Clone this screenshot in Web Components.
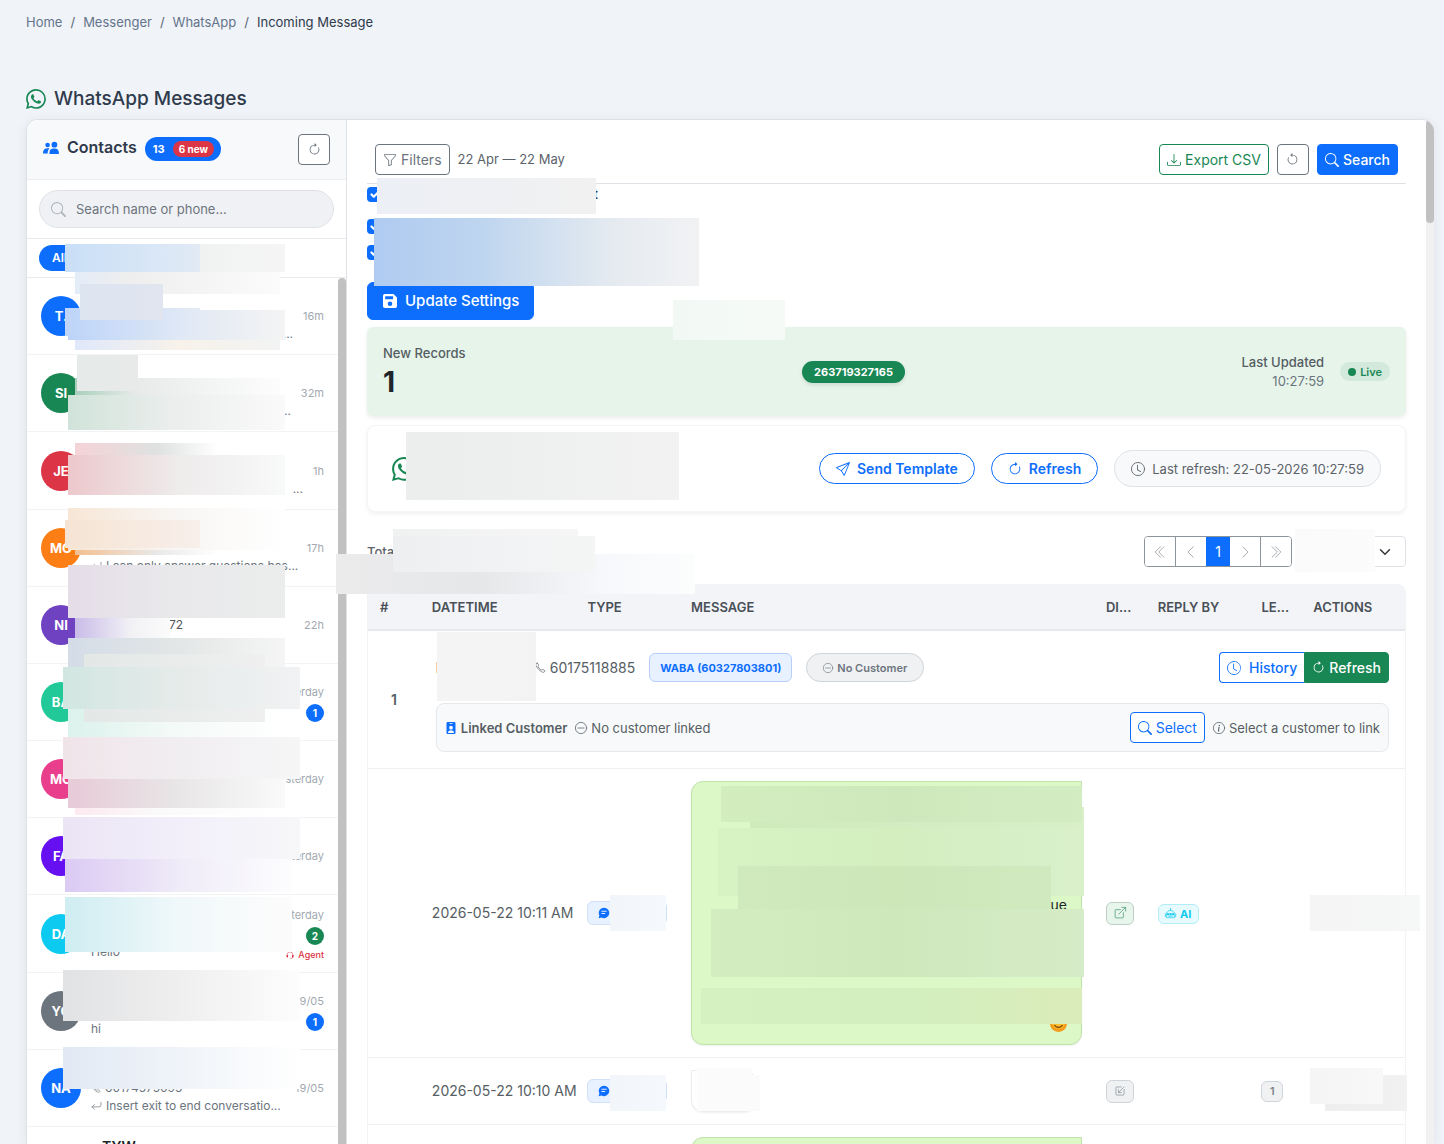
<!DOCTYPE html>
<html lang="en">
<head>
<meta charset="utf-8">
<title>WhatsApp Messages</title>
<style>
    html, body { height: 100%; }
    body {
        margin: 0;
        overflow: hidden;
        background: #f0f3f8;
        color: #2f3b4c;
        font: 13px/20px Inter, "Liberation Sans", sans-serif;
    }
</style>
</head>
<body>
<whatsapp-page></whatsapp-page>

<script>
// icon markup on a 16x16 grid, .s = stroked
const ICONS = {
    whatsapp: '<path d="M13.601 2.326A7.85 7.85 0 0 0 7.994 0C3.627 0 .068 3.558.064 7.926c0 1.399.366 2.76 1.057 3.965L0 16l4.204-1.102a7.9 7.9 0 0 0 3.79.965h.004c4.368 0 7.926-3.558 7.93-7.93A7.9 7.9 0 0 0 13.6 2.326zM7.994 14.521a6.6 6.6 0 0 1-3.356-.92l-.24-.144-2.494.654.666-2.433-.156-.251a6.56 6.56 0 0 1-1.007-3.505c0-3.626 2.957-6.584 6.591-6.584a6.56 6.56 0 0 1 4.66 1.931 6.56 6.56 0 0 1 1.928 4.66c-.004 3.639-2.961 6.592-6.592 6.592m3.615-4.934c-.197-.099-1.17-.578-1.353-.646-.182-.065-.315-.099-.445.099-.133.197-.513.646-.627.775-.114.133-.232.148-.43.05-.197-.1-.836-.308-1.592-.985-.59-.525-.985-1.175-1.103-1.372-.114-.198-.011-.304.088-.403.087-.088.197-.232.296-.346.1-.114.133-.198.198-.33.065-.134.034-.248-.015-.347-.05-.099-.445-1.076-.612-1.47-.16-.389-.323-.335-.445-.34-.114-.007-.247-.007-.38-.007a.73.73 0 0 0-.529.247c-.182.198-.691.677-.691 1.654s.71 1.916.81 2.049c.098.133 1.394 2.132 3.383 2.992.47.205.84.326 1.129.418.475.152.904.129 1.246.08.38-.058 1.171-.48 1.338-.943.164-.464.164-.86.114-.943-.049-.084-.182-.133-.38-.232"/>',
    people: '<circle cx="4.6" cy="5" r="2.3"/><circle cx="11.4" cy="4.7" r="2.9"/><path d="M6.500 14c-.4-3.600 1.300-5.400 4.700-5.400s5 1.800 4.700 5.400zM0 13.500c-.2-3.500 1.500-5.300 5-5.300.6 0 1 .1 1.500.2-1.400 1.200-1.900 3-1.800 5.100z"/>',
    clockwise: '<path d="M8 3a5 5 0 1 0 4.546 2.914.5.5 0 0 1 .908-.417A6 6 0 1 1 8 2z"/><path d="M8 4.466V.534a.25.25 0 0 1 .41-.192l2.360 1.966c.12.1.12.284 0 .384L8.410 4.658A.25.25 0 0 1 8 4.466"/>',
    counter: '<path d="M8 3a5 5 0 1 1-4.546 2.914.5.5 0 0 0-.908-.417A6 6 0 1 0 8 2z"/><path d="M8 4.466V.534a.25.25 0 0 0-.41-.192L5.230 2.308a.25.25 0 0 0 0 .384l2.360 1.966A.25.25 0 0 0 8 4.466"/>',
    search: '<path d="M11.742 10.344a6.5 6.5 0 1 0-1.397 1.398h-.001q.044.06.098.115l3.850 3.850a1 1 0 0 0 1.415-1.414l-3.850-3.850a1 1 0 0 0-.115-.1zM12 6.5a5.5 5.5 0 1 1-11 0 5.5 5.5 0 0 1 11 0"/>',
    funnel: '<path d="M1.5 1.5A.5.5 0 0 1 2 1h12a.5.5 0 0 1 .5.5v2a.5.5 0 0 1-.128.334L10 8.692V13.500a.5.5 0 0 1-.342.474l-3 1A.5.5 0 0 1 6 14.500V8.692L1.628 3.834A.5.5 0 0 1 1.5 3.5zm1 .5v1.308l4.372 4.858A.5.5 0 0 1 7 8.500v5.306l2-.666V8.500a.5.5 0 0 1 .128-.334L13.500 3.308V2z"/>',
    download: '<path d="M.5 9.900a.5.5 0 0 1 .5.5v2.500a1 1 0 0 0 1 1h12a1 1 0 0 0 1-1v-2.500a.5.5 0 0 1 1 0v2.500a2 2 0 0 1-2 2H2a2 2 0 0 1-2-2v-2.500a.5.5 0 0 1 .5-.5"/><path d="M7.646 11.854a.5.5 0 0 0 .708 0l3-3a.5.5 0 0 0-.708-.708L8.500 10.293V1.500a.5.5 0 0 0-1 0v8.793L5.354 8.146a.5.5 0 1 0-.708.708z"/>',
    send: '<path d="M15.854.146a.5.5 0 0 1 .11.54l-5.819 14.547a.75.75 0 0 1-1.329.124l-3.178-4.995L.643 7.184a.75.75 0 0 1 .124-1.330L15.314.037a.5.5 0 0 1 .54.11ZM6.636 10.070l2.761 4.338L14.130 2.576zm6.787-8.201L1.591 6.602l4.339 2.760z"/>',
    clock: '<path d="M8 3.500a.5.5 0 0 0-1 0V9a.5.5 0 0 0 .252.434l3.500 2a.5.5 0 0 0 .496-.868L8 8.710z"/><circle class="s" cx="8" cy="8" r="7.5"/>',
    history: '<path class="s" d="M8 .5a7.500 7.500 0 1 0 0 15c2 0 3.800-.8 5.200-2.100M7.500 3.500V9l3.500 2"/><path class="s" stroke-dasharray="1.500 1.300" d="M8 .5a7.500 7.500 0 0 1 5.500 12.600"/>',
    save: '<path fill-rule="evenodd" d="M2 0h10l4 4v10a2 2 0 0 1-2 2H2a2 2 0 0 1-2-2V2a2 2 0 0 1 2-2zM2.500 2.500v3.500h9V2.500zM8 8.500a2.600 2.600 0 1 0 0 5.200 2.600 2.600 0 0 0 0-5.200z"/>',
    first: '<path class="s" d="M8.500 2l-6 6 6 6M12.500 2l-6 6 6 6"/>',
    prev: '<path class="s" d="M10.500 2l-6 6 6 6"/>',
    next: '<path class="s" d="M5.500 2l6 6-6 6"/>',
    last: '<path class="s" d="M3.500 2l6 6-6 6M7.500 2l6 6-6 6"/>',
    phone: '<path class="s" d="M3.300 1.600L5.100 4c.2.300-.7 2.600-.4 3.400.5 1.400 2.800 3.700 4 4 .8.200 3-.6 3.300-.4l2.400 1.800c.5.400-.9 1.900-1.500 2.100C9.700 16 .5 7.500 1.300 3.200c.2-.7 1.600-2.100 2-1.600z"/>',
    dash: '<circle class="s" cx="8" cy="8" r="7.500"/><path class="s" d="M4 8h8"/>',
    info: '<circle class="s" cx="8" cy="8" r="7.500"/><path d="M8.900 6.600l-2.300.3-.1.400.5.100c.3.100.3.200.3.400l-.7 3.500c-.2.900.1 1.300.8 1.300.6 0 1.200-.3 1.500-.6l.1-.4c-.2.200-.5.200-.7.200-.3 0-.4-.2-.3-.5z"/><circle cx="8.500" cy="4.500" r="1"/>',
    badge: '<path fill-rule="evenodd" d="M3.500 0h9A1.500 1.500 0 0 1 14 1.500v13a1.500 1.500 0 0 1-1.500 1.500h-9A1.500 1.500 0 0 1 2 14.500v-13A1.500 1.500 0 0 1 3.500 0zM6 1.500v1h4v-1zM8 5a2.500 2.500 0 1 0 0 5 2.500 2.500 0 0 0 0-5zM4 14.500h8c0-2.300-1.500-3.500-4-3.500s-4 1.200-4 3.500z"/>',
    chat: '<path fill-rule="evenodd" d="M8 1a7 7 0 1 1-3.400 13.100L.8 15l1.100-3.600A7 7 0 0 1 8 1zM4.500 5v1.300h7V5zm0 3v1.300h5V8z"/>',
    out: '<path class="s" d="M8.500 3.500h-6a1 1 0 0 0-1 1v9a1 1 0 0 0 1 1h9a1 1 0 0 0 1-1v-6M10.500.5h5v5M15.500.5L6.500 9.500"/>',
    in: '<path class="s" d="M10 1.500H3a1.500 1.500 0 0 0-1.500 1.500v10A1.500 1.500 0 0 0 3 14.500h10a1.500 1.500 0 0 0 1.500-1.500V5.500M5.500 6v4.500H10M14.500 1.500l-9 9"/>',
    robot: '<path class="s" d="M2 13.500V9.500a6 6 0 0 1 12 0v4zM8 .5v3M.5 8.500v4M15.500 8.500v4M5.500 12h5"/><path fill-rule="evenodd" d="M3 7.500h10v3H3zM5.500 8.200v1.300h1.300V8.200zm3.800 0v1.300h1.300V8.200z"/>',
    reply: '<path class="s" d="M14.500 2v3.500a3 3 0 0 1-3 3H1.500M5 5L1.500 8.500 5 12"/>',
    headset: '<path class="s" d="M2 9V8a6 6 0 0 1 12 0v4c0 1.500-1 2.500-3 2.500H8.500"/><path d="M1 8h3v5H3a2 2 0 0 1-2-2zM12 8h3v3a2 2 0 0 1-2 2h-1z"/>',
    smile: '<circle cx="8" cy="8" r="8" fill="#f59b1c"/><ellipse cx="8" cy="7.500" rx="6" ry="5.800" fill="#fbc02d"/><path d="M4 9.500q4 4.500 8 0" fill="none" stroke="#8a4b08" stroke-width="1.300"/>'
};

// registers an element whose shadow root is filled from html(el)
function define(name, html) {
    customElements.define(name, class extends HTMLElement {
        constructor() {
            super();
            this._isInitialized = false;
        }
        connectedCallback() {
            if (this._isInitialized) return;
            this._isInitialized = true;
            const root = this.attachShadow({ mode: "open" });
            const template = document.createElement("template");
            template.innerHTML = html(this);
            root.append(template.content.cloneNode(true));
        }
    });
}

define("ui-icon", el => `
    <style>
        :host { display: inline-flex; flex: none; }
        svg { display: block; fill: currentColor; overflow: visible; }
        .s { fill: none; stroke: currentColor; stroke-linecap: round; stroke-linejoin: round; }
    </style>
    <svg viewBox="0 0 16 16" width="${el.getAttribute("size") || 14}" height="${el.getAttribute("size") || 14}" aria-hidden="true">${ICONS[el.getAttribute("name")]}</svg>
`);

define("ui-button", el => `
    <style>
        :host { display: inline-flex; --c: #6c757d; }
        :host([tone=blue]) { --c: #0d6efd; }
        :host([tone=green]) { --c: #198754; }
        button {
            display: inline-flex; align-items: center; justify-content: center; gap: 4px;
            font: 400 14px/21px Inter, sans-serif; color: var(--c); background: #fff;
            border: 1px solid var(--c); border-radius: 4px; padding: 4px 7px; margin: 0; white-space: nowrap;
        }
        :host([solid]) button { background: var(--c); color: #fff; font-weight: 500; }
        :host([medium]) button { font-weight: 500; }
        :host([square]) button { width: 32px; height: 31px; padding: 0; }
        :host([pill]) button { border-radius: 16px; padding: 4px 16px; gap: 7px; font-weight: 600; }
        :host([large]) button { font-size: 15px; line-height: 24px; padding: 6px 14px 6px 15px; gap: 8px; border-radius: 6px; }
        :host([first]) button { border-radius: 4px 0 0 4px; border-right: 0; gap: 8px; }
        :host([last]) button { border-radius: 0 4px 4px 0; }
    </style>
    <button type="button" aria-label="${el.getAttribute("label") || el.textContent.trim()}">
        <ui-icon name="${el.getAttribute("icon")}" size="${el.getAttribute("icon-size") || 14}"></ui-icon><slot></slot>
    </button>
`);

define("mask-block", el => {
    const a = n => el.getAttribute(n);
    return `
    <style>
        :host {
            position: absolute; pointer-events: none;
            ${a("r") !== null ? "right" : "left"}: ${a("r") !== null ? a("r") : a("x")}px;
            top: ${a("y")}px; width: ${a("w")}px; height: ${a("h")}px;
            background: linear-gradient(90deg, ${a("fill")});
        }
    </style>`;
});

define("page-breadcrumb", () => `
    <style>
        :host { display: block; }
        ol { display: flex; gap: 8px; list-style: none; margin: 0; padding: 0; }
        li + li { display: flex; gap: 8px; }
        li + li::before { content: "/"; color: #5b6675; }
        a { color: #64748b; text-decoration: none; }
    </style>
    <nav aria-label="Breadcrumb"><ol>
        <li><a href="#">Home</a></li>
        <li><a href="#">Messenger</a></li>
        <li><a href="#">WhatsApp</a></li>
        <li aria-current="page">Incoming Message</li>
    </ol></nav>
`);

define("contact-row", el => {
    const a = n => el.getAttribute(n);
    return `
    <style>
        :host {
            display: flex; align-items: center; gap: 10px; box-sizing: border-box; flex: none;
            height: 77px; padding: 0 14px; border-bottom: 1px solid #f2f3f5;
        }
        :host([tall]) { height: 78px; }
        .avatar {
            width: 40px; height: 40px; border-radius: 50%; flex: none; box-sizing: border-box;
            background: ${a("color")}; color: #fff; font-weight: 700; line-height: 40px; text-align: center;
        }
        .body { flex: 1; min-width: 0; font-size: 12px; line-height: 18px; color: #6c757d; }
        .body div { height: 18px; display: flex; align-items: center; gap: 4px; }
        .name { color: #212529; font-size: 14px; font-weight: 600; padding-left: 11px; }
        .tail { width: 92px; text-align: right; color: #555; }
        .text { white-space: nowrap; }
        .push { margin-left: auto; }
        .meta { display: flex; flex-direction: column; align-items: flex-end; gap: 3px; }
        .time { font-size: 11px; line-height: 18px; color: #a3a9b0; }
        .count {
            min-width: 18px; height: 18px; border-radius: 9px; background: #0d6efd; color: #fff;
            font-size: 10px; font-weight: 700; line-height: 18px; text-align: center;
        }
        .count.green { background: #198754; }
        .agent { display: flex; align-items: center; gap: 4px; font-size: 9px; font-weight: 500; line-height: 14px; color: #dc3545; }
    </style>
    <div class="avatar">${a("initials")}</div>
    <div class="body">
        <div class="name">${a("name") || ""}</div>
        <div>${a("phone") ? `<ui-icon name="phone" size="10"></ui-icon>${a("phone")}` : ""}${a("tail") ? `<span class="tail">${a("tail")}</span>` : ""}</div>
        <div>${a("icon") ? `<ui-icon name="${a("icon")}" size="11"></ui-icon>` : ""}<span class="text ${a("preview") === "..." ? "push" : ""}">${a("preview") || ""}</span></div>
    </div>
    <div class="meta">
        <span class="time">${a("time") || ""}</span>
        ${a("count") ? `<span class="count ${a("agent") !== null ? "green" : ""}">${a("count")}</span>` : ""}
        ${a("agent") !== null ? `<span class="agent"><ui-icon name="headset" size="8"></ui-icon>Agent</span>` : ""}
    </div>`;
});

define("contacts-panel", () => `
    <style>
        :host { display: flex; flex-direction: column; min-height: 0; border-right: 1px solid #dee2e6; background: #fff; }
        header { display: flex; justify-content: space-between; align-items: center; padding: 14px 16px; background: #f8f9fa; border-bottom: 1px solid #eceef0; }
        h2 { display: flex; align-items: baseline; gap: 8px; margin: 0 0 4px; font-size: 16px; font-weight: 600; line-height: 24px; }
        h2 ui-icon { align-self: center; color: #0d6efd; }
        .total { display: flex; align-items: center; gap: 8px; background: #0d6efd; color: #fff; font-size: 11px; font-weight: 700; border-radius: 12px; padding: 0 7px 0 8px; height: 24px; }
        .new { background: #dc3545; font-size: 10px; line-height: 16px; border-radius: 8px; padding: 0 6px; }
        .search { padding: 10px 12px; border-bottom: 1px solid #e9ecef; }
        label { display: flex; align-items: center; gap: 10px; height: 36px; padding: 0 11px; border: 1px solid #dee2e6; border-radius: 19px; background: #f0f1f5; color: #adb5bd; }
        input { flex: 1; min-width: 0; border: 0; background: none; outline: 0; padding: 0; font: 13px/20px Inter, sans-serif; }
        input::placeholder { color: #6c757d; }
        .tabs { padding: 6px 12px; border-bottom: 1px solid #e9ecef; }
        .tabs button { display: block; height: 26px; border: 0; border-radius: 13px; background: #0d6efd; color: #fff; font: 600 12px/26px Inter, sans-serif; padding: 0 13px; }
        .scroll { display: flex; flex: 1; min-height: 0; }
        .list { flex: 1; min-width: 0; overflow: hidden; display: flex; flex-direction: column; }
        .bar { width: 8px; background: #c1c1c1; border-radius: 4px 4px 0 0; }
    </style>
    <header>
        <h2><ui-icon name="people" size="16"></ui-icon>Contacts <span class="total">13 <span class="new">6 new</span></span></h2>
        <ui-button icon="clockwise" icon-size="13" square label="Reload contacts"></ui-button>
    </header>
    <div class="search"><label><ui-icon name="search" size="15"></ui-icon><input type="text" placeholder="Search name or phone..." aria-label="Search name or phone"></label></div>
    <div class="tabs"><button type="button">All</button></div>
    <div class="scroll">
        <div class="list">
            <contact-row initials="T." color="#0d6efd" time="16m" preview="..."></contact-row>
            <contact-row initials="SI" color="#198754" time="32m" preview="..."></contact-row>
            <contact-row initials="JE" color="#dc3545" time="1h" preview="..." tall></contact-row>
            <contact-row initials="MO" color="#fd7e14" time="17h" icon="reply" preview="I can only answer questions bas..."></contact-row>
            <contact-row initials="NI" color="#6f42c1" time="22h" tail="72"></contact-row>
            <contact-row initials="BA" color="#20c997" time="Yesterday" count="1"></contact-row>
            <contact-row initials="MO" color="#e83e8c" time="Yesterday"></contact-row>
            <contact-row initials="FA" color="#6610f2" time="Yesterday"></contact-row>
            <contact-row initials="DA" color="#0dcaf0" time="Yesterday" count="2" agent preview="Hello" tall></contact-row>
            <contact-row initials="YO" color="#6c757d" time="19/05" count="1" preview="hi"></contact-row>
            <contact-row initials="NA" color="#0d6efd" time="19/05" phone="60174575095" icon="reply" preview="Insert exit to end conversatio..."></contact-row>
            <contact-row initials="TY" color="#198754" name="TYW"></contact-row>
        </div>
        <div class="bar"></div>
    </div>
`);

define("filter-bar", () => `
    <style>
        :host { display: flex; align-items: center; gap: 8px; padding: 8px; border-bottom: 1px solid #dee2e6; }
        .range { flex: 1; padding-bottom: 2px; color: #5c636a; }
    </style>
    <ui-button icon="funnel">Filters</ui-button>
    <span class="range">22 Apr — 22 May</span>
    <ui-button icon="download" tone="green">Export CSV</ui-button>
    <ui-button icon="counter" icon-size="13" square label="Reset"></ui-button>
    <ui-button icon="search" tone="blue" solid>Search</ui-button>
`);

define("notify-settings", () => `
    <style>
        :host { display: block; padding-top: 2px; }
        label { display: flex; align-items: center; height: 16px; margin-bottom: 16px; font-size: 14px; font-weight: 600; }
        label + label { margin-bottom: 10px; }
        label + label + label { margin-bottom: 22px; }
        span { padding-left: 211px; }
        input {
            appearance: none; box-sizing: border-box; width: 15px; height: 15px; margin: 0; border-radius: 4px;
            background: #0d6efd url("data:image/svg+xml,%3Csvg xmlns='http://www.w3.org/2000/svg' viewBox='0 0 20 20'%3E%3Cpath fill='none' stroke='%23fff' stroke-linecap='round' stroke-linejoin='round' stroke-width='3' d='m6 10 3 3 6-6'/%3E%3C/svg%3E");
        }
    </style>
    <label><input type="checkbox" checked><span>t</span></label>
    <label><input type="checkbox" checked aria-label="Sound"></label>
    <label><input type="checkbox" checked aria-label="Popup"></label>
    <ui-button icon="save" tone="blue" solid large>Update Settings</ui-button>
`);

define("records-card", () => `
    <style>
        :host {
            display: flex; justify-content: space-between; align-items: center; box-sizing: border-box;
            height: 89px; padding: 0 16px; background: #e6f4ea; border-radius: 6px; box-shadow: 0 2px 4px rgba(0,0,0,.08);
            color: #555d63; font-weight: 500;
        }
        b { display: block; color: #212529; font-size: 28px; line-height: 38px; }
        .number { background: #198754; color: #fff; font-size: 11px; font-weight: 700; line-height: 22px; padding: 0 12px; border-radius: 11px; box-shadow: 0 2px 4px rgba(0,0,0,.1); }
        .right { display: flex; align-items: center; gap: 16px; text-align: right; }
        .time { font-weight: 400; color: #6c757d; }
        .right div > div { line-height: 19px; }
        .live { display: flex; align-items: center; gap: 4px; height: 19px; padding: 0 8px; border-radius: 10px; background: #d3e9dc; color: #198754; font-size: 11px; font-weight: 600; }
        .live::before { content: ""; width: 8px; height: 8px; border-radius: 50%; background: #198754; }
    </style>
    <div>New Records<b>1</b></div>
    <span class="number">263719327165</span>
    <div class="right"><div><div>Last Updated</div><div class="time">10:27:59</div></div><span class="live">Live</span></div>
`);

define("channel-card", () => `
    <style>
        :host {
            display: flex; align-items: center; gap: 16px; box-sizing: border-box; height: 87px; padding: 0 24px;
            border: 1px solid #f4f5f6; border-radius: 8px; background: #fff; box-shadow: 0 2px 4px rgba(0,0,0,.06);
        }
        .logo { flex: 1; color: #198754; }
        .stamp { display: flex; align-items: center; gap: 7px; height: 35px; padding: 0 16px; border: 1px solid #dee2e6; border-radius: 19px; background: #f8f9fa; color: #5c636a; }
    </style>
    <ui-icon class="logo" name="whatsapp" size="24"></ui-icon>
    <ui-button icon="send" tone="blue" pill>Send Template</ui-button>
    <ui-button icon="clockwise" tone="blue" pill>Refresh</ui-button>
    <span class="stamp"><ui-icon name="clock"></ui-icon>Last refresh: 22-05-2026 10:27:59</span>
`);

define("list-pager", () => `
    <style>
        :host { display: flex; align-items: center; gap: 8px; }
        .total { flex: 1; font-weight: 500; color: #5c636a; }
        nav { display: flex; height: 31px; box-sizing: border-box; border: 1px solid #8d949a; border-radius: 4px; overflow: hidden; }
        nav button { width: 31px; border: 0; border-right: 1px solid #8d949a; padding: 0; background: #fff; color: #9aa0a6; display: flex; align-items: center; justify-content: center; font: 14px/20px Inter, sans-serif; }
        nav button:nth-child(2) { border: 0; width: 30px; }
        nav button:last-child { border: 0; width: 30px; }
        nav .on { width: 24px; height: 31px; margin: -1px 0; border: 0; background: #0d6efd; color: #fff; }
        select {
            width: 106px; height: 31px; border: 1px solid #dee2e6; border-radius: 4px; appearance: none;
            background: #fff url("data:image/svg+xml,%3Csvg xmlns='http://www.w3.org/2000/svg' viewBox='0 0 16 16'%3E%3Cpath fill='none' stroke='%23343a40' stroke-linecap='round' stroke-linejoin='round' stroke-width='2' d='m2 5 6 6 6-6'/%3E%3C/svg%3E") no-repeat right 14px center / 12px 12px;
        }
    </style>
    <span class="total">Total</span>
    <nav aria-label="Pages">
        <button type="button" aria-label="First"><ui-icon name="first"></ui-icon></button>
        <button type="button" aria-label="Previous"><ui-icon name="prev"></ui-icon></button>
        <button type="button" class="on">1</button>
        <button type="button" aria-label="Next"><ui-icon name="next"></ui-icon></button>
        <button type="button" aria-label="Last"><ui-icon name="last"></ui-icon></button>
    </nav>
    <select aria-label="Rows per page"><option></option></select>
`);

define("message-bubble", () => `
    <style>
        :host {
            display: flex; flex-direction: column; align-items: flex-end; justify-content: space-between; position: relative;
            box-sizing: border-box; height: 264px; padding: 12px 14px; color: #212529; text-align: right;
            background: #dcf8c6; border: 1px solid #c0e2ab; border-radius: 12px 0 12px 12px; box-shadow: 0 1px 2px rgba(0,0,0,.06);
        }
        :host([plain]) { width: 65px; height: 42px; background: #fff; border-color: #ebedef; border-radius: 0 12px 12px 12px; }
    </style>
    <slot></slot>
`);

define("message-table", () => `
    <style>
        :host { display: block; border: 1px solid #f2f3f5; border-top: 0; border-radius: 8px 8px 0 0; background: #fff; }
        table { width: 100%; table-layout: fixed; border-collapse: separate; border-spacing: 0; font-size: 14px; color: #565e64; }
        th {
            box-sizing: border-box; height: 47px; padding: 0 12px; background: #f3f4f7; border-bottom: 2px solid #e6e8eb;
            font-size: 13px; font-weight: 600; color: #495057; text-align: left; white-space: nowrap;
        }
        th:first-child { border-top-left-radius: 8px; }
        th:last-child { border-top-right-radius: 8px; }
        td { padding: 12px; border-bottom: 1px solid #eef0f2; white-space: nowrap; }
        .n { text-align: center; font-weight: 600; }
        .wide { padding: 21px 16px 16px; }
        .row { display: flex; align-items: center; gap: 14px; }
        .name { width: 85px; font-weight: 600; }
        .phone { display: flex; align-items: center; gap: 4px; }
        .waba, .none { display: flex; align-items: center; gap: 4px; height: 27px; padding: 0 10px; border: 1px solid #b6d0fb; border-radius: 6px; background: #e7f1ff; color: #0d6efd; font-size: 11px; font-weight: 700; }
        .none { padding: 0 16px; border-color: #ced4da; border-radius: 15px; background: #f0f1f3; color: #6c757d; font-weight: 600; }
        .group { display: flex; margin-left: auto; }
        .linked { display: flex; align-items: center; gap: 8px; margin-top: 20px; padding: 8px; border: 1px solid #e6e9ec; border-radius: 8px; background: #f8f9fa; font-size: 13px; }
        .linked span { display: flex; align-items: center; gap: 4px; }
        .linked strong { display: flex; align-items: center; gap: 4px; font-weight: 600; }
        .linked strong ui-icon { color: #0d6efd; }
        .linked ui-button { margin-left: auto; }
        .tag { display: inline-flex; align-items: center; justify-content: center; gap: 4px; box-sizing: border-box; vertical-align: middle; height: 23px; width: 28px; border: 1px solid #ced4da; border-radius: 6px; background: #f0f1f3; color: #7b838a; font-size: 11px; font-weight: 600; }
        .type { width: 80px; height: 24px; justify-content: flex-start; padding: 0 10px; border-color: #cfe0f8; background: #e7f1ff; color: #0d6efd; }
        .out { background: #e8f5ed; border-color: #bccfc5; color: #4c9a75; }
        .ai { width: 41px; height: 20px; background: #e7fafe; border-color: #b0edf9; color: #0dcaf0; font-weight: 700; }
        .le { width: 22px; height: 21px; }
    </style>
    <table>
        <colgroup><col style="width:5%"><col style="width:15%"><col style="width:10%"><col style="width:40%"><col style="width:5%"><col style="width:10%"><col style="width:5%"><col style="width:10%"></colgroup>
        <thead><tr><th>#</th><th>DATETIME</th><th>TYPE</th><th>MESSAGE</th><th>DI...</th><th>REPLY BY</th><th>LE...</th><th>ACTIONS</th></tr></thead>
        <tbody>
            <tr>
                <td class="n">1</td>
                <td class="wide" colspan="7">
                    <div class="row">
                        <div class="row"><span class="name">L</span><span class="phone"><ui-icon name="phone" size="11"></ui-icon>60175118885</span></div>
                        <span class="waba">WABA (60327803801)</span>
                        <span class="none"><ui-icon name="dash" size="10"></ui-icon>No Customer</span>
                        <div class="group"><ui-button icon="history" tone="blue" medium first>History</ui-button><ui-button icon="clockwise" icon-size="13" tone="green" solid last>Refresh</ui-button></div>
                    </div>
                    <div class="linked">
                        <strong><ui-icon name="badge" size="12"></ui-icon>Linked Customer</strong>
                        <span><ui-icon name="dash" size="12"></ui-icon>No customer linked</span>
                        <ui-button icon="search" tone="blue">Select</ui-button>
                        <span><ui-icon name="info" size="12"></ui-icon>Select a customer to link</span>
                    </div>
                </td>
            </tr>
            <tr>
                <td></td><td>2026-05-22 10:11 AM</td>
                <td><span class="tag type"><ui-icon name="chat" size="12"></ui-icon></span></td>
                <td><message-bubble>
                    <i></i><span>ue</span><ui-icon name="smile" size="17"></ui-icon>
                    <mask-block r="-3" y="25" w="334" h="21" fill="#cfeabb, #d8efc8"></mask-block>
                    <mask-block r="-1" y="4" w="361" h="36" fill="#d3edbf, #cfe8bb, #d3ecc2"></mask-block>
                    <mask-block r="-3" y="46" w="366" h="68" fill="#d7f2c3, #d4eec0, #d9f0cb"></mask-block>
                    <mask-block r="30" y="84" w="313" h="43" fill="#d0e9bd, #cde7b9, #d1e9be"></mask-block>
                    <mask-block r="-3" y="127" w="373" h="68" fill="#d3ecc0, #cee8bb, #d6ebc7"></mask-block>
                    <mask-block r="-1" y="206" w="381" h="36" fill="#d5f1c1, #d3efbf, #daecb9"></mask-block>
                </message-bubble></td>
                <td><span class="tag out"><ui-icon name="out" size="12"></ui-icon></span></td>
                <td><span class="tag ai"><ui-icon name="robot" size="11"></ui-icon>AI</span></td>
                <td></td><td></td>
            </tr>
            <tr>
                <td></td><td>2026-05-22 10:10 AM</td>
                <td><span class="tag type"><ui-icon name="chat" size="12"></ui-icon></span></td>
                <td><message-bubble plain></message-bubble></td>
                <td><span class="tag"><ui-icon name="in" size="10"></ui-icon></span></td>
                <td></td><td><span class="tag le">1</span></td><td></td>
            </tr>
            <tr><td></td><td></td><td></td><td><message-bubble></message-bubble></td><td></td><td></td><td></td><td></td></tr>
        </tbody>
    </table>
`);

// x / r: distance from the left / right edge of the page
const MASKS = [
    [75, 272, 205, 22, "#e3ecf8, #eeeeee 25%, #fbfbfb"], [65, 244, 135, 28, "#c9dff7, #e1eaf5"], [200, 244, 85, 28, "#f0f2f2, #f5f5f5"],
    [75, 335, 205, 15, "#dfe8fa, #f7f2ea, #f2f3f3"], [68, 310, 217, 30, "#bcd3f8, #dfe8f4 50%, #f4f4f4"], [65, 308, 135, 28, "#bdd4f9, #e4ebf5"], [80, 284, 83, 36, "#dde5f1, #e0e5ef"],
    [75, 378, 205, 40, "#a9d0bc, #e8eaea 30%, #fdfdfd"], [68, 395, 217, 35, "#d0e3da, #eceeed 50%, #fafafa"], [77, 355, 61, 36, "#e6eae9, #e7eae9"],
    [75, 443, 205, 30, "#f5d3d7, #dfe1e1 40%, #ffffff 70%"], [68, 455, 217, 40, "#ecc8cc, #eeebeb 50%, #f8f9f9"],
    [75, 540, 205, 15, "#f3bf90, #e9e9e9 40%, #ffffff 70%"], [68, 508, 217, 42, "#f7e6d6, #f8f6f4 50%, #ffffff"], [65, 520, 135, 28, "#f5e4d3, #f8efeb"],
    [75, 615, 95, 23, "#c9bce8, #f2f2f5 60%, #fbfbfb"], [68, 565, 217, 53, "#e5dde8, #e9e9eb 50%, #ebecec"], [68, 638, 217, 40, "#d3dce7, #e3e6e6 50%, #f5f5f5"],
    [68, 700, 217, 38, "#dcf2ec, #f4faf8 50%, #ffffff"], [84, 654, 181, 68, "#e3e8e7, #efefef"], [63, 667, 237, 42, "#d2e6e1, #e6ebea 50%, #f1f2f3"],
    [75, 795, 205, 20, "#fdeaf0, #fafafa 40%, #ffffff"], [68, 770, 217, 38, "#e7cad7, #e8e6e7 50%, #fafafa"], [63, 737, 237, 42, "#f0e4e9, #f1eef1 50%, #f6f6f7"],
    [65, 855, 227, 37, "#dbcaf3, #efebf8 50%, #fdfdfe"], [63, 817, 237, 42, "#ebe4f5, #f2effa 50%, #f7f7f9"],
    [65, 897, 227, 55, "#cfedf2, #f0f8fa 50%, #fdfcfc"], [63, 970, 237, 51, "#e1e2e4, #efefef 50%, #fdfdfd"], [63, 1047, 237, 42, "#e1e9f4, #f0f4f9 50%, #ffffff"],
    [377, 178, 219, 36, "#eceff5, #f1f1f1"], [374, 218, 325, 68, "#b0cbf1, #bed5ef 33%, #e6ebf0 75%, #f1f2f4"], [673, 300, 112, 40, "#f2f9f5, #f6faf7"],
    [406, 432, 273, 68, "#ebeeed, #f2f2f2"], [336, 554, 359, 40, "#ebebec, #e6e7e9 40%, #f6f8fb 75%, #fcfdfd"], [393, 529, 185, 20, "#f0f1f1, #f6f6f6"], [393, 536, 202, 36, "#eeeff1, #f4f5f5"],
    [437, 632, 99, 69, "#f4f4f5, #f3f3f3"], [610, 895, 56, 36, "#f2f6fb, #f5f8fd"], [610, 1075, 56, 36, "#f2f6fb, #f5f8fd"],
    [720, 1075, 40, 36, "#fafafa, #fbfbfb"], [697, 1068, 55, 43, "#fcfcfc, #fbfbfb"]
];
const RIGHT_MASKS = [
    [69, 529, 80, 43, "#fafafa, #fcfcfc"], [24, 895, 110, 36, "#f5f5f5, #f6f7f7"], [37, 1075, 82, 36, "#eeeeef, #f1f1f2"], [61, 1068, 73, 36, "#f5f5f5, #f8f8f8"]
];
const block = (side, m) => `<mask-block ${side}="${m[0]}" y="${m[1]}" w="${m[2]}" h="${m[3]}" fill="${m[4]}"></mask-block>`;

define("whatsapp-page", () => `
    <style>
        :host { display: flex; flex-direction: column; position: relative; box-sizing: border-box; height: 100%; padding: 12px 10px 0 26px; overflow: hidden; }
        h1 { display: flex; align-items: center; gap: 8px; margin: 52px 0 5px; font-size: 19px; font-weight: 500; line-height: 30px; }
        h1 ui-icon { color: #198754; }
        .card {
            display: grid; grid-template-columns: 320px minmax(0, 1fr); grid-template-rows: minmax(0, 1fr); flex: 1; min-height: 0; overflow: hidden; background: #fff;
            border: 1px solid #dee2e6; border-bottom: 0; border-right: 0; border-radius: 12px 12px 0 0; box-shadow: 0 2px 12px rgba(0,0,0,.07);
        }
        .right { display: flex; min-height: 0; }
        main { flex: 1; min-width: 0; overflow: hidden; padding: 16px 20px 0; }
        records-card { margin-top: 7px; }
        channel-card { margin-top: 9px; }
        list-pager { margin: 24px 0 17px; }
        .track { width: 8px; background: #f1f1f1; }
        .thumb { height: 103px; border-radius: 4px; background: #c1c1c1; }
    </style>
    <page-breadcrumb></page-breadcrumb>
    <h1><ui-icon name="whatsapp" size="20"></ui-icon>WhatsApp Messages</h1>
    <div class="card">
        <contacts-panel></contacts-panel>
        <div class="right">
            <main>
                <filter-bar></filter-bar>
                <notify-settings></notify-settings>
                <records-card></records-card>
                <channel-card></channel-card>
                <list-pager></list-pager>
                <message-table></message-table>
            </main>
            <div class="track"><div class="thumb"></div></div>
        </div>
    </div>
    ${MASKS.map(m => block("x", m)).join("")}
    ${RIGHT_MASKS.map(m => block("r", m)).join("")}
`);
</script>
</body>
</html>
